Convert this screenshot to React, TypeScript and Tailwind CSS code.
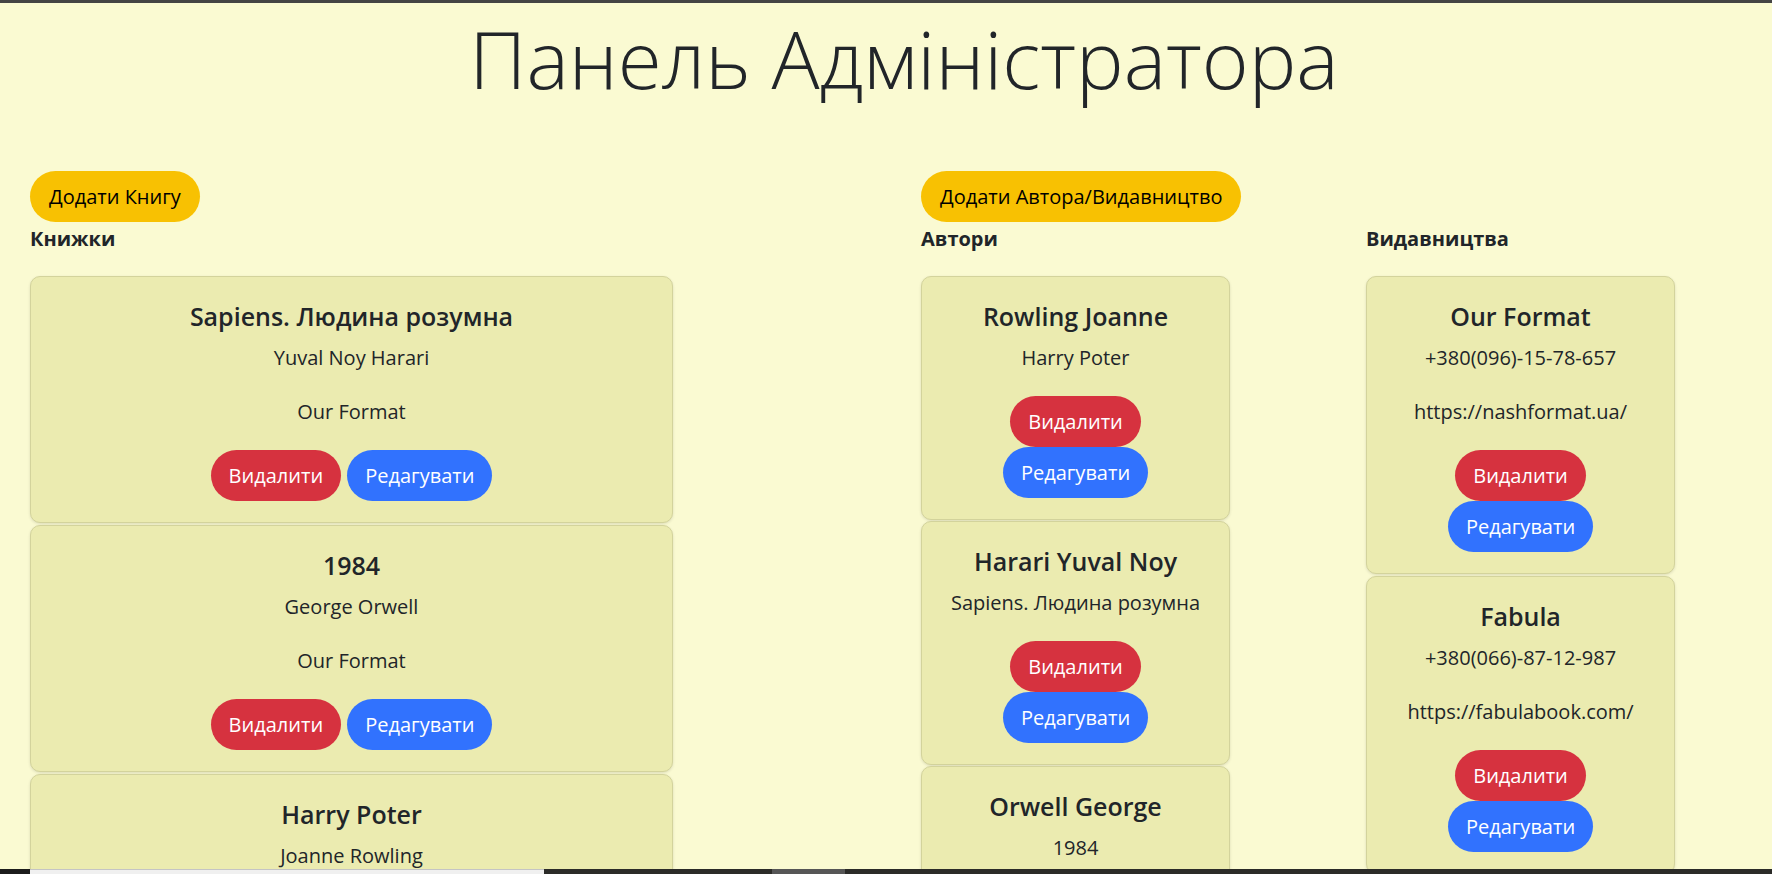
import React from "react";

type Book = { title: string; author: string; publisher: string };
type Author = { name: string; books: string };
type Publisher = { name: string; phone: string; site: string };

const books: Book[] = [
  { title: "Sapiens. Людина розумна", author: "Yuval Noy Harari", publisher: "Our Format" },
  { title: "1984", author: "George Orwell", publisher: "Our Format" },
  { title: "Harry Poter", author: "Joanne Rowling", publisher: "Fabula" },
];

const authors: Author[] = [
  { name: "Rowling Joanne", books: "Harry Poter" },
  { name: "Harari Yuval Noy", books: "Sapiens. Людина розумна" },
  { name: "Orwell George", books: "1984" },
];

const publishers: Publisher[] = [
  { name: "Our Format", phone: "+380(096)-15-78-657", site: "https://nashformat.ua/" },
  { name: "Fabula", phone: "+380(066)-87-12-987", site: "https://fabulabook.com/" },
];

function PillButton({ color, children }: { color: "red" | "blue" | "yellow"; children: React.ReactNode }) {
  const colors = {
    red: "bg-[#d6323f] text-white px-[18px]",
    blue: "bg-[#3172fe] text-white px-[18px]",
    yellow: "bg-[#f8c102] text-black px-[19px]",
  };
  return (
    <button className={`h-[51px] rounded-full text-[20px] leading-[30px] flex items-center whitespace-nowrap ${colors[color]}`}>
      {children}
    </button>
  );
}

function Card({ title, lines, stacked }: { title: string; lines: string[]; stacked?: boolean }) {
  return (
    <div className="bg-[#ebebb0] border border-[#d3d39c] rounded-[10px] shadow-[0_1px_3px_rgba(0,0,0,0.12)] pt-[24px] pb-[21px] px-4 text-center text-[#212529]">
      <h5 className="text-[25px] leading-[30px] font-semibold mb-[11px]">{title}</h5>
      {lines.map((line) => (
        <p key={line} className="text-[20px] leading-[32px] mb-[22px]">
          {line}
        </p>
      ))}
      <div className={stacked ? "flex flex-col items-center" : "flex justify-center gap-[6px]"}>
        <PillButton color="red">Видалити</PillButton>
        <PillButton color="blue">Редагувати</PillButton>
      </div>
    </div>
  );
}

function SectionLabel({ children }: { children: React.ReactNode }) {
  return <h6 className="text-[20px] leading-[30px] font-bold text-[#212529] mt-[2px] mb-[22px]">{children}</h6>;
}

export default function App() {
  return (
    <div className="h-[874px] flex flex-col overflow-hidden bg-[#fafad2] font-['Open_Sans',sans-serif] text-[#212529]">
      <div className="h-[3px] bg-[#444444]" />
      <main className="flex-1 overflow-hidden">
        <h1 className="text-center font-light text-[80px] leading-[110px] pl-[36px] text-[#212529]">
          Панель Адміністратора
        </h1>

        <div className="flex mt-[58px]">
          {/* books */}
          <section className="w-[921px] shrink-0 pl-[30px]">
            <div className="flex">
              <PillButton color="yellow">Додати Книгу</PillButton>
            </div>
            <SectionLabel>Книжки</SectionLabel>
            <div className="w-[643px] flex flex-col gap-[2px]">
              {books.map((b) => (
                <Card key={b.title} title={b.title} lines={[b.author, b.publisher]} />
              ))}
            </div>
          </section>

          {/* authors and publishers */}
          <section className="flex-1 min-w-0">
            <div className="flex">
              <PillButton color="yellow">Додати Автора/Видавництво</PillButton>
            </div>
            <div className="flex">
              <div className="w-[445px] shrink-0">
                <SectionLabel>Автори</SectionLabel>
                <div className="w-[309px] flex flex-col gap-[1px]">
                  {authors.map((a) => (
                    <Card key={a.name} title={a.name} lines={[a.books]} stacked />
                  ))}
                </div>
              </div>
              <div className="flex-1">
                <SectionLabel>Видавництва</SectionLabel>
                <div className="w-[309px] flex flex-col gap-[2px]">
                  {publishers.map((p) => (
                    <Card key={p.name} title={p.name} lines={[p.phone, p.site]} stacked />
                  ))}
                </div>
              </div>
            </div>
          </section>
        </div>
      </main>

      {/* bottom scroll strip */}
      <div className="h-[5px] flex">
        <div className="w-[30px] bg-[#1c1c1c]" />
        <div className="w-[514px] bg-[#f0f0f0] border-t border-[#c4c4c4]" />
        <div className="w-[228px] bg-[#2b2b28]" />
        <div className="w-[73px] bg-[#565656]" />
        <div className="flex-1 bg-[#2b2b28]" />
      </div>
    </div>
  );
}
